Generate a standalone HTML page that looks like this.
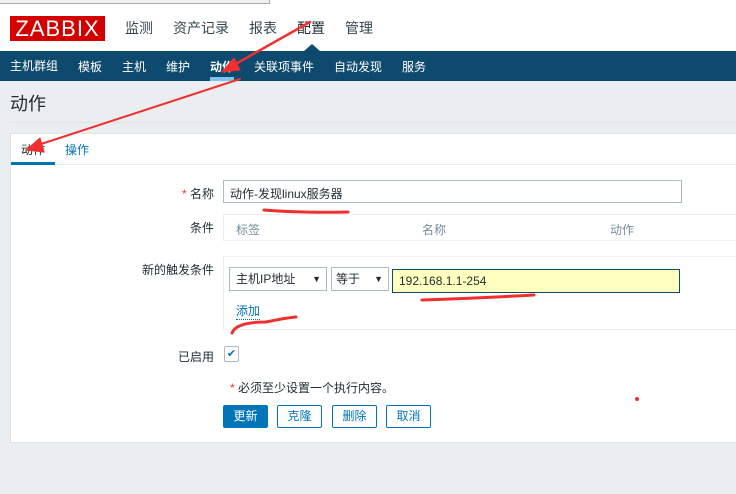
<!DOCTYPE html>
<html><head><meta charset="utf-8"><style>
*{margin:0;padding:0;box-sizing:border-box}
body{width:736px;height:494px;overflow:hidden;background:#ebeef0;font-family:"Liberation Sans","Noto Sans CJK SC",sans-serif;font-size:12px;color:#1f2c33;position:relative}
.a{position:absolute;white-space:nowrap}
.l{position:absolute;right:522px;white-space:nowrap;text-align:right}
</style></head><body>
<div class="a" style="left:0;top:0;width:736px;height:51px;background:#fff"></div>
<div class="a" style="left:0;top:0;width:270px;height:4px;border-bottom:1px solid #aaa;border-right:1px solid #aaa;background:#f0f0f0"></div>
<div class="a" style="left:10px;top:16px;width:95px;height:25px;background:#d40000;color:#fff;font-size:22px;line-height:25px;text-align:center;letter-spacing:1px">ZABBIX</div>
<div class="a" style="top:18px;left:125px;font-size:14px;color:#37474f;line-height:20px">监测</div>
<div class="a" style="top:18px;left:173px;font-size:14px;color:#37474f;line-height:20px">资产记录</div>
<div class="a" style="top:18px;left:249px;font-size:14px;color:#37474f;line-height:20px">报表</div>
<div class="a" style="top:18px;left:297px;font-size:14px;color:#1f2c33;line-height:20px">配置</div>
<div class="a" style="top:18px;left:345px;font-size:14px;color:#37474f;line-height:20px">管理</div>
<div class="a" style="left:0;top:51px;width:736px;height:30px;background:#0e4a6e"></div>
<div class="a" style="left:304px;top:44px;width:0;height:0;border-left:8px solid transparent;border-right:8px solid transparent;border-bottom:7px solid #0e4a6e"></div>
<div class="a" style="top:58px;left:10px;color:#fff;line-height:16px">主机群组</div>
<div class="a" style="top:58px;left:78px;color:#fff">模板</div>
<div class="a" style="top:58px;left:122px;color:#fff">主机</div>
<div class="a" style="top:58px;left:166px;color:#fff">维护</div>
<div class="a" style="top:58px;left:210px;color:#fff;font-weight:bold">动作</div>
<div class="a" style="top:77px;left:210px;width:24px;height:4px;background:#7fc4ed"></div>
<div class="a" style="top:58px;left:254px;color:#fff">关联项事件</div>
<div class="a" style="top:58px;left:334px;color:#fff">自动发现</div>
<div class="a" style="top:58px;left:402px;color:#fff">服务</div>
<div class="a" style="top:92px;left:10px;font-size:18px;line-height:24px;color:#1f2c33">动作</div>
<div class="a" style="top:122px;left:10px;width:726px;height:1px;background:#dfe4e7"></div>
<div class="a" style="top:133px;left:10px;width:726px;height:310px;background:#fff;border:1px solid #dfe4e7;border-right:none"></div>
<div class="a" style="top:141px;left:21px">动作</div>
<div class="a" style="top:141px;left:65px;color:#0275b8">操作</div>
<div class="a" style="top:164px;left:11px;width:725px;height:1px;background:#ebeef0"></div>
<div class="a" style="top:162px;left:11px;width:44px;height:3px;background:#0275b8"></div>
<div class="l" style="top:185px"><span style="color:#e33734">* </span>名称</div>
<div class="a" style="top:180px;left:223px;width:459px;height:23px;border:1px solid #acbbc2;padding:4px 6px">动作-发现linux服务器</div>
<div class="l" style="top:219px">条件</div>
<div class="a" style="top:214px;left:223px;width:513px;height:27px;border:1px solid #ebeef0;border-right:none"></div>
<div class="a" style="top:221px;left:236px;color:#768d99">标签</div>
<div class="a" style="top:221px;left:422px;color:#768d99">名称</div>
<div class="a" style="top:221px;left:610px;color:#768d99">动作</div>
<div class="l" style="top:261px">新的触发条件</div>
<div class="a" style="top:256px;left:223px;width:513px;height:74px;border:1px solid #ebeef0;border-right:none"></div>
<div class="a" style="top:267px;left:229px;width:98px;height:24px;border:1px solid #acbbc2;padding:0 6px;line-height:22px">主机IP地址<span style="position:absolute;right:5px;top:0;font-size:9px">▼</span></div>
<div class="a" style="top:267px;left:331px;width:58px;height:24px;border:1px solid #acbbc2;padding:0 4px;line-height:22px">等于<span style="position:absolute;right:5px;top:0;font-size:9px">▼</span></div>
<div class="a" style="top:269px;left:392px;width:288px;height:24px;border:1px solid #0e4a6e;background:#ffffc0;padding:0 6px;line-height:22px">192.168.1.1-254</div>
<div class="a" style="top:304px;left:236px;color:#0275b8;border-bottom:1px dotted #0275b8;line-height:15px">添加</div>
<div class="l" style="top:348px">已启用</div>
<div class="a" style="top:346px;left:224px;width:15px;height:16px;border:1px solid #acbbc2;border-radius:2px;color:#0275b8;font-size:11px;line-height:14px;text-align:center">✔</div>
<div class="a" style="top:379px;left:230px"><span style="color:#e33734">* </span>必须至少设置一个执行内容。</div>
<div class="a" style="top:405px;left:223px;width:45px;height:23px;background:#0275b8;color:#fff;border-radius:2px;text-align:center;line-height:23px">更新</div>
<div class="a" style="top:405px;left:277px;width:45px;height:23px;border:1px solid #0275b8;color:#0275b8;border-radius:2px;text-align:center;line-height:21px">克隆</div>
<div class="a" style="top:405px;left:332px;width:45px;height:23px;border:1px solid #0275b8;color:#0275b8;border-radius:2px;text-align:center;line-height:21px">删除</div>
<div class="a" style="top:405px;left:386px;width:45px;height:23px;border:1px solid #0275b8;color:#0275b8;border-radius:2px;text-align:center;line-height:21px">取消</div>
<svg class="a" style="left:0;top:0" width="736" height="494">
<g stroke="#f03030" fill="#f03030" stroke-linecap="round">
<line x1="310" y1="22" x2="232" y2="66" stroke-width="2.5"/>
<polygon points="222,72 234,58 240,70"/>
<line x1="240" y1="79" x2="38" y2="145" stroke-width="2"/>
<polygon points="26,150 40,138 44,152"/>
<path d="M264 210 Q300 213 348 212" stroke-width="3" fill="none"/>
<path d="M422 300 Q480 298 534 295" stroke-width="3" fill="none"/>
<path d="M232 333 Q236 322 266 322 Q285 318 296 317" stroke-width="3" fill="none"/>
<circle cx="637" cy="399" r="1.5"/>
</g></svg>
</body></html>
